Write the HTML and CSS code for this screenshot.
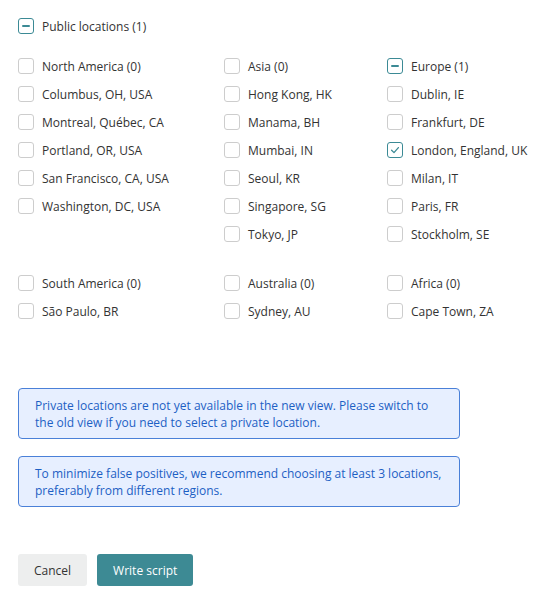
FILE: index.html
```html
<!DOCTYPE html>
<html>
<head>
<meta charset="utf-8">
<link rel="stylesheet" href="styles.css">
</head>
<body>
<div class="page">
  <label class="item header"><span class="box mixed"></span><span>Public locations (1)</span></label>

  <div class="grid">
    <div class="col">
      <label class="item"><span class="box"></span><span>North America (0)</span></label>
      <label class="item"><span class="box"></span><span>Columbus, OH, USA</span></label>
      <label class="item"><span class="box"></span><span>Montreal, Québec, CA</span></label>
      <label class="item"><span class="box"></span><span>Portland, OR, USA</span></label>
      <label class="item"><span class="box"></span><span>San Francisco, CA, USA</span></label>
      <label class="item"><span class="box"></span><span>Washington, DC, USA</span></label>
    </div>
    <div class="col">
      <label class="item"><span class="box"></span><span>Asia (0)</span></label>
      <label class="item"><span class="box"></span><span>Hong Kong, HK</span></label>
      <label class="item"><span class="box"></span><span>Manama, BH</span></label>
      <label class="item"><span class="box"></span><span>Mumbai, IN</span></label>
      <label class="item"><span class="box"></span><span>Seoul, KR</span></label>
      <label class="item"><span class="box"></span><span>Singapore, SG</span></label>
      <label class="item"><span class="box"></span><span>Tokyo, JP</span></label>
    </div>
    <div class="col">
      <label class="item"><span class="box mixed"></span><span>Europe (1)</span></label>
      <label class="item"><span class="box"></span><span>Dublin, IE</span></label>
      <label class="item"><span class="box"></span><span>Frankfurt, DE</span></label>
      <label class="item"><span class="box checked"><svg viewBox="0 0 16 16" width="16" height="16"><path d="M4.6 8.3 L7 10.6 L11.4 5.6" fill="none" stroke="#3b8a95" stroke-width="1.3" stroke-linecap="round" stroke-linejoin="round"/></svg></span><span>London, England, UK</span></label>
      <label class="item"><span class="box"></span><span>Milan, IT</span></label>
      <label class="item"><span class="box"></span><span>Paris, FR</span></label>
      <label class="item"><span class="box"></span><span>Stockholm, SE</span></label>
    </div>
  </div>

  <div class="grid group2">
    <div class="col">
      <label class="item"><span class="box"></span><span>South America (0)</span></label>
      <label class="item"><span class="box"></span><span>São Paulo, BR</span></label>
    </div>
    <div class="col">
      <label class="item"><span class="box"></span><span>Australia (0)</span></label>
      <label class="item"><span class="box"></span><span>Sydney, AU</span></label>
    </div>
    <div class="col">
      <label class="item"><span class="box"></span><span>Africa (0)</span></label>
      <label class="item"><span class="box"></span><span>Cape Town, ZA</span></label>
    </div>
  </div>

  <div class="notes">
    <div class="note">Private locations are not yet available in the new view. Please switch to the old view if you need to select a private location.</div>
    <div class="note">To minimize false positives, we recommend choosing at least 3 locations, preferably from different regions.</div>
  </div>

  <div class="actions">
    <button class="btn cancel">Cancel</button>
    <button class="btn primary">Write script</button>
  </div>
</div>
</body>
</html>
```

FILE: styles.css
```css
* { box-sizing: border-box; }
html, body { margin: 0; padding: 0; background: #fff; }
body {
  font-family: "Open Sans", "Noto Sans", sans-serif;
  font-size: 12px;
  color: #333;
}
.page {
  padding: 12px 18px 0 18px;
  display: flex;
  flex-direction: column;
  align-items: flex-start;
}
.item {
  display: flex;
  align-items: center;
  height: 28px;
  gap: 8px;
  white-space: nowrap;
}
.box {
  width: 16px;
  height: 16px;
  border: 1px solid #cdcdcd;
  border-radius: 3px;
  background: #fff;
  flex: none;
  display: flex;
  align-items: center;
  justify-content: center;
  position: relative;
}
.box svg { position: absolute; left: -1px; top: -1px; }
.box.mixed, .box.checked { border-color: #3b8a95; }
.box.mixed::after {
  content: "";
  width: 8px;
  height: 2px;
  background: #3b8a95;
  border-radius: 1px;
}
.grid {
  display: grid;
  grid-template-columns: 206px 163px auto;
  margin-top: 12px;
}
.group2 { margin-top: 21px; }
.col { display: flex; flex-direction: column; }
.notes {
  margin-top: 63px;
  display: flex;
  flex-direction: column;
  gap: 17px;
}
.note {
  width: 442px;
  border: 1px solid #4a80d8;
  background: #e7efff;
  border-radius: 4px;
  color: #1d5fc4;
  font-size: 12px;
  line-height: 17px;
  padding: 8px 16px 7px 16px;
}
.actions {
  margin-top: 47px;
  display: flex;
  gap: 10px;
}
.btn {
  font-family: "Open Sans", "Noto Sans", sans-serif;
  font-size: 12px;
  height: 32px;
  border: none;
  border-radius: 3px;
  padding: 0 16px;
  cursor: pointer;
  white-space: nowrap;
}
.cancel { background: #edeeee; color: #333; }
.primary { background: #3d8a94; color: #fff; }
```
